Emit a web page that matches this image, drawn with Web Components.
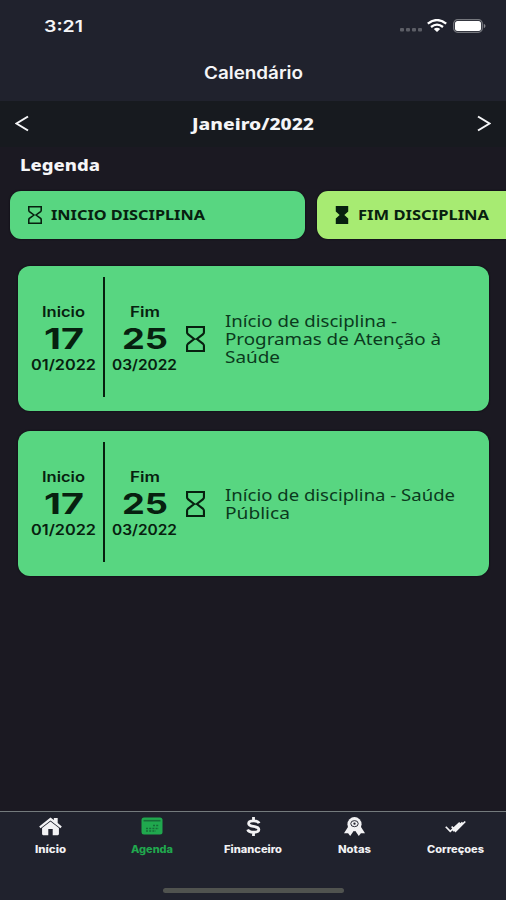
<!DOCTYPE html>
<html lang="pt-BR">
<head>
<meta charset="utf-8">
<title>Calendário</title>
<style>
    body {
        margin: 0;
        background: #1b1922;
    }
</style>
</head>
<body>
<agenda-app></agenda-app>

<script>
// One line of text stretched to the width given in the "w" attribute
class FitText extends HTMLElement {

    constructor() {
        super();
        this.shadowDOM = this.attachShadow({mode: "open"});
    }

    connectedCallback() {
        this.shadowDOM.innerHTML = `
            <style>
                :host {
                    display: block;
                    flex: none;
                    white-space: nowrap;
                }
                span {
                    display: inline-block;
                    transform-origin: 0 50%;
                }
            </style>
            <span><slot></slot></span>`;
        const width = Number(this.getAttribute("w"));
        const span = this.shadowDOM.querySelector("span");
        const natural = span.getBoundingClientRect().width;
        this.style.width = width + "px";
        span.style.transform = `scaleX(${width / natural})`;
    }
}
customElements.define("fit-text", FitText);

const ICONS = {
    hourglass: `<svg viewBox="0 0 18 25" fill="none" stroke="currentColor" stroke-width="2"><path d="M1 1H17V6Q17 7 16.200 7.800L10.300 12.500L16.200 17.200Q17 18 17 19V24H1V19Q1 18 1.800 17.200L7.700 12.500L1.800 7.800Q1 7 1 6Z"/></svg>`,
    hourglassFull: `<svg viewBox="0 0 18 25" fill="currentColor"><path d="M1 0H17V7.500L12 12.500L17 17.500V25H1V17.500L6 12.500L1 7.500Z"/></svg>`,
    left: `<svg viewBox="0 0 14 18" fill="none" stroke="currentColor" stroke-width="2"><path d="M13 1.500L1.500 9L13 16.500"/></svg>`,
    right: `<svg viewBox="0 0 14 18" fill="none" stroke="currentColor" stroke-width="2"><path d="M1 1.500L12.500 9L1 16.500"/></svg>`,
    home: `<svg viewBox="0 0 24 20" fill="currentColor"><path d="M12 .5L15.500 3.200V1H19.500V6.300L23.800 9.900L22.400 11.900L12 3.800L1.600 11.900L.2 9.900Z"/><path d="M12 4.700L20.800 11.500V18Q20.800 19.200 19.600 19.200H14.300V12.500H9.700V19.200H4.400Q3.200 19.200 3.200 18V11.500Z"/></svg>`,
    calendar: `<svg viewBox="0 0 22 18"><rect x=".5" y=".5" width="21" height="17" rx="2.500" fill="#20a84e"/><path d="M2.500 3.700H19.500" stroke="#176c38" stroke-width="1.600"/><path d="M12 8.500H18M5 11.500H18M5 14H15" stroke="#176c38" stroke-width="1.500" stroke-dasharray="2 1.200"/></svg>`,
    dollar: `<svg viewBox="0 0 16 20" fill="none" stroke="currentColor" stroke-width="3"><path d="M14 6.600Q13 4 8 4Q2.800 4 2.800 6.900Q2.800 9.200 8 9.900Q13.700 10.700 13.700 13.200Q13.700 16.100 8 16.100Q2.800 16.100 1.800 13.200M8 0V4.500M8 15.500V20"/></svg>`,
    award: `<svg viewBox="0 0 22 20" fill="currentColor"><path d="M4.500 10L0 17L4.300 17L6.500 20L11 13.500ZM17.500 10L22 17L17.700 17L15.500 20L11 13.500Z"/><circle cx="11" cy="7.500" r="7.400"/><ellipse cx="11" cy="7" rx="3.900" ry="3.200" fill="none" stroke="#20222d" stroke-width="1"/><circle cx="11" cy="7" r="1.200" fill="#20222d"/></svg>`,
    checks: `<svg viewBox="0 0 22 14" fill="none" stroke="currentColor" stroke-width="1.800"><path d="M.8 7.300L5.500 12.200L15.500 2.800M7 7L11 12L21.200 1.600M8.500 12L18.300 2.500"/></svg>`,
    signal: `<svg viewBox="0 0 24 5" fill="#5c5e66"><rect x="1" y="1" width="4" height="3.500" rx="1"/><rect x="7" y="1" width="4" height="3.500" rx="1"/><rect x="13" y="1" width="4" height="3.500" rx="1"/><rect x="19" y="1" width="4" height="3.500" rx="1"/></svg>`,
    wifi: `<svg viewBox="0 0 20 13" fill="none" stroke="#fff" stroke-width="2.300"><path d="M.8 4.700Q10-2.600 19.200 4.700M4 8Q10 3.200 16 8"/><path d="M6.800 10Q10 7.400 13.200 10L10 13Z" fill="#fff" stroke="none"/></svg>`,
    battery: `<svg viewBox="0 0 33 14"><rect x=".7" y=".7" width="28.600" height="12.600" rx="4" fill="none" stroke="#75777d" stroke-width="1.300"/><rect x="2" y="2" width="26" height="10" rx="2.500" fill="#fff"/><path d="M30.800 4.800Q32.500 5.500 32.500 7Q32.500 8.500 30.800 9.200Z" fill="#85878c"/></svg>`
};

class AppIcon extends HTMLElement {

    constructor() {
        super();
        this.shadowDOM = this.attachShadow({mode: "open"});
    }

    connectedCallback() {
        this.shadowDOM.innerHTML = `
            <style>
                :host {
                    display: block;
                    flex: none;
                }
                svg {
                    display: block;
                    width: 100%;
                    height: 100%;
                }
            </style>
            ${ICONS[this.getAttribute("name")].replace("<svg", '<svg preserveAspectRatio="none"')}`;
    }
}
customElements.define("app-icon", AppIcon);

class StatusBar extends HTMLElement {

    constructor() {
        super();
        this.shadowDOM = this.attachShadow({mode: "open"});
    }

    connectedCallback() {
        this.shadowDOM.innerHTML = `
            <style>
                :host {
                    display: flex;
                    align-items: center;
                    box-sizing: border-box;
                    height: 51px;
                    padding: 0 20px 0 44px;
                    font: 600 16px/20px Inter, sans-serif;
                }
                .signal { width: 24px; height: 5px; margin: 7px 4px 0 auto; }
                .wifi { width: 20px; height: 13px; margin-right: 6px; }
                .battery { width: 33px; height: 14px; }
            </style>
            <fit-text w="39">3:21</fit-text>
            <app-icon class="signal" name="signal"></app-icon>
            <app-icon class="wifi" name="wifi"></app-icon>
            <app-icon class="battery" name="battery"></app-icon>`;
    }
}
customElements.define("status-bar", StatusBar);

class MonthBar extends HTMLElement {

    constructor() {
        super();
        this.shadowDOM = this.attachShadow({mode: "open"});
    }

    connectedCallback() {
        this.shadowDOM.innerHTML = `
            <style>
                :host {
                    display: flex;
                    align-items: center;
                    justify-content: space-between;
                    box-sizing: border-box;
                    height: 46px;
                    padding: 0 15px;
                    background: #171a1f;
                    font: 800 16.500px/24px "Noto Sans", sans-serif;
                }
                app-icon { width: 14px; height: 17px; margin-bottom: 2px; }
            </style>
            <app-icon name="left"></app-icon>
            <fit-text w="122"><slot></slot></fit-text>
            <app-icon name="right"></app-icon>`;
    }
}
customElements.define("month-bar", MonthBar);

class LegendChip extends HTMLElement {

    constructor() {
        super();
        this.shadowDOM = this.attachShadow({mode: "open"});
    }

    connectedCallback() {
        this.shadowDOM.innerHTML = `
            <style>
                :host {
                    display: flex;
                    flex: none;
                    align-items: center;
                    gap: 9px;
                    box-sizing: border-box;
                    width: 295px;
                    height: 48px;
                    padding-left: 18px;
                    border-radius: 11px;
                    background: var(--chip-color);
                    box-shadow: 0 0 2px #08060c;
                    color: #07200f;
                    font: 700 14px/20px "Noto Sans", sans-serif;
                }
                app-icon { width: 14px; height: 18px; }
            </style>
            <app-icon name="${this.getAttribute("icon")}"></app-icon>
            <slot></slot>`;
    }
}
customElements.define("legend-chip", LegendChip);

class DateColumn extends HTMLElement {

    constructor() {
        super();
        this.shadowDOM = this.attachShadow({mode: "open"});
    }

    connectedCallback() {
        const [labelWidth, dayWidth] = this.getAttribute("widths").split(" ");
        this.shadowDOM.innerHTML = `
            <style>
                :host {
                    display: flex;
                    flex: none;
                    flex-direction: column;
                    align-items: center;
                    width: 65px;
                    font: 600 14px/18px Inter, sans-serif;
                    color: #07200f;
                }
                .day {
                    margin: 2px 0 1px;
                    font-size: 29px;
                    line-height: 32px;
                    font-weight: 700;
                }
            </style>
            <fit-text w="${labelWidth}">${this.getAttribute("label")}</fit-text>
            <fit-text class="day" w="${dayWidth}">${this.getAttribute("day")}</fit-text>
            <fit-text w="65">${this.getAttribute("month")}</fit-text>`;
    }
}
customElements.define("date-column", DateColumn);

class EventCard extends HTMLElement {

    constructor() {
        super();
        this.shadowDOM = this.attachShadow({mode: "open"});
    }

    connectedCallback() {
        this.shadowDOM.innerHTML = `
            <style>
                :host {
                    display: flex;
                    align-items: center;
                    box-sizing: border-box;
                    height: 145px;
                    padding-left: 13px;
                    border-radius: 12px;
                    background: #58d681;
                    box-shadow: 0 0 2px #08060c;
                    color: #0b3a1d;
                    font: 400 16px/18px "Noto Sans", sans-serif;
                }
                .line {
                    width: 2px;
                    height: 120px;
                    margin: 0 7px 4px;
                    background: #07200f;
                }
                app-icon {
                    width: 19px;
                    height: 26px;
                    margin: 0 20px 0 9px;
                    color: #07200f;
                }
            </style>
            <date-column label="Inicio" day="17" month="01/2022" widths="43 40"></date-column>
            <div class="line"></div>
            <date-column label="Fim" day="25" month="03/2022" widths="30 46"></date-column>
            <app-icon name="hourglass"></app-icon>
            <div><slot></slot></div>`;
    }
}
customElements.define("event-card", EventCard);

class TabItem extends HTMLElement {

    constructor() {
        super();
        this.shadowDOM = this.attachShadow({mode: "open"});
    }

    connectedCallback() {
        const [width, height] = this.getAttribute("size").split(" ");
        this.shadowDOM.innerHTML = `
            <style>
                :host {
                    display: flex;
                    flex: 1;
                    flex-direction: column;
                    align-items: center;
                    color: #f2f2f4;
                    font: 800 10px/14px Inter, sans-serif;
                }
                :host([active]) { color: #20a84e; }
                .icon {
                    display: flex;
                    align-items: center;
                    height: 28px;
                    margin-bottom: 2px;
                }
                app-icon {
                    width: ${width}px;
                    height: ${height}px;
                }
            </style>
            <div class="icon"><app-icon name="${this.getAttribute("icon")}"></app-icon></div>
            <slot></slot>`;
    }
}
customElements.define("tab-item", TabItem);

class TabBar extends HTMLElement {

    constructor() {
        super();
        this.shadowDOM = this.attachShadow({mode: "open"});
    }

    connectedCallback() {
        this.shadowDOM.innerHTML = `
            <style>
                :host {
                    display: flex;
                    flex: none;
                    flex-direction: column;
                    justify-content: space-between;
                    box-sizing: border-box;
                    height: 89px;
                    border-top: 1px solid #747b7d;
                    background: #20222d;
                }
                nav { display: flex; }
                .handle {
                    width: 181px;
                    height: 5px;
                    margin: 0 auto 7px;
                    border-radius: 3px;
                    background: #50534f;
                }
            </style>
            <nav>
                <tab-item icon="home" size="23 19"><fit-text w="31">Início</fit-text></tab-item>
                <tab-item icon="calendar" size="22 18" active><fit-text w="42">Agenda</fit-text></tab-item>
                <tab-item icon="dollar" size="15 19"><fit-text w="58">Financeiro</fit-text></tab-item>
                <tab-item icon="award" size="21 19"><fit-text w="33">Notas</fit-text></tab-item>
                <tab-item icon="checks" size="21 13"><fit-text w="57">Correçoes</fit-text></tab-item>
            </nav>
            <div class="handle"></div>`;
    }
}
customElements.define("tab-bar", TabBar);

class AgendaApp extends HTMLElement {

    constructor() {
        super();
        this.shadowDOM = this.attachShadow({mode: "open"});
    }

    connectedCallback() {
        this.shadowDOM.innerHTML = `
            <style>
                :host {
                    display: flex;
                    flex-direction: column;
                    height: 900px;
                    overflow: hidden;
                    color: #f5f5f7;
                }
                header {
                    height: 101px;
                    background: #20222d;
                }
                .title {
                    display: flex;
                    justify-content: center;
                    padding-top: 10px;
                    font: 600 17.500px/24px Inter, sans-serif;
                }
                .legend-title {
                    padding: 6px 0 0 20px;
                    font: 800 16px/24px "Noto Sans", sans-serif;
                }
                .legend {
                    display: flex;
                    gap: 12px;
                    padding: 14px 0 0 10px;
                }
                .events {
                    display: flex;
                    flex: 1;
                    flex-direction: column;
                    gap: 20px;
                    padding: 27px 17px 0 18px;
                }
            </style>
            <header>
                <status-bar></status-bar>
                <div class="title"><fit-text w="99">Calendário</fit-text></div>
            </header>
            <month-bar>Janeiro/2022</month-bar>
            <div class="legend-title"><fit-text w="80">Legenda</fit-text></div>
            <div class="legend">
                <legend-chip icon="hourglass" style="--chip-color: #58d681"><fit-text w="154">INICIO DISCIPLINA</fit-text></legend-chip>
                <legend-chip icon="hourglassFull" style="--chip-color: #a7eb72"><fit-text w="131">FIM DISCIPLINA</fit-text></legend-chip>
            </div>
            <div class="events">
                <event-card>
                    <fit-text w="172">Início de disciplina -</fit-text>
                    <fit-text w="216">Programas de Atenção à</fit-text>
                    <fit-text w="55">Saúde</fit-text>
                </event-card>
                <event-card>
                    <fit-text w="230">Início de disciplina - Saúde</fit-text>
                    <fit-text w="65">Pública</fit-text>
                </event-card>
            </div>
            <tab-bar></tab-bar>`;
    }
}
customElements.define("agenda-app", AgendaApp);
</script>
</body>
</html>
